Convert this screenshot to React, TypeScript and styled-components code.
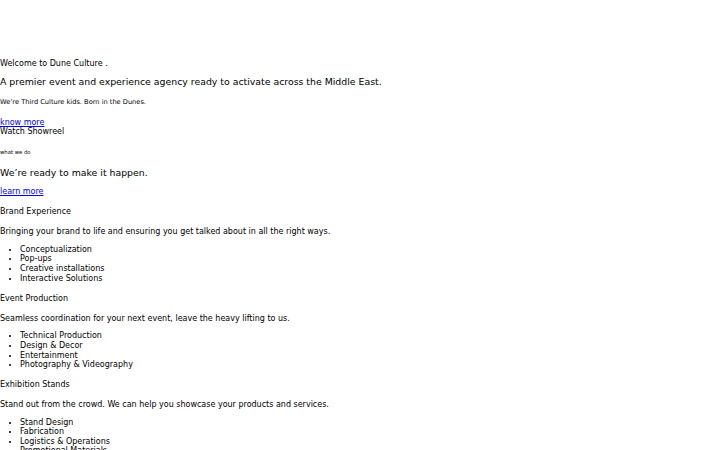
import React from "react";
import styled, { createGlobalStyle } from "styled-components";

const GlobalStyle = createGlobalStyle`
  html, body {
    margin: 0;
    padding: 0;
    background: #ffffff;
  }
  body {
    font-family: "DejaVu Sans", sans-serif;
    color: #000000;
    font-size: 8px;
    line-height: 9.4px;
  }
`;

const Page = styled.div`
  display: block;
`;

const Header = styled.header`
  height: 59px;
`;

const Hero = styled.section`
  display: block;
`;

const Text = styled.p<{ size?: number; top?: number }>`
  margin: ${props => (props.top !== undefined ? props.top : 0)}px 0 0 0;
  font-size: ${props => (props.size ? props.size : 8)}px;
  line-height: ${props => (props.size ? props.size * 1.17 : 9.4)}px;
`;

const Heading = styled.h2<{ top: number }>`
  margin: ${props => props.top}px 0 0 0;
  font-size: 9.35px;
  font-weight: normal;
  line-height: 11px;
`;

const Link = styled.a<{ top: number }>`
  display: block;
  margin-top: ${props => props.top}px;
  color: #0000ee;
  text-decoration: underline;
  font-size: 8px;
  line-height: 9.4px;
`;

const Plain = styled.div`
  font-size: 8px;
  line-height: 9.4px;
`;

const Services = styled.section`
  display: block;
`;

const Service = styled.div`
  display: block;
`;

const Title = styled.h3<{ top: number }>`
  margin: ${props => props.top}px 0 0 0;
  font-size: 8px;
  font-weight: normal;
  line-height: 9.4px;
`;

const List = styled.ul<{ top: number }>`
  margin: ${props => props.top}px 0 0 0;
  padding-left: 20px;
  list-style: disc;
`;

const Item = styled.li`
  font-size: 8px;
  line-height: 9.6px;
`;

const services = [
  {
    title: "Brand Experience",
    text: "Bringing your brand to life and ensuring you get talked about in all the right ways.",
    items: ["Conceptualization", "Pop-ups", "Creative installations", "Interactive Solutions"],
    top: 10.8
  },
  {
    title: "Event Production",
    text: "Seamless coordination for your next event, leave the heavy lifting to us.",
    items: ["Technical Production", "Design & Decor", "Entertainment", "Photography & Videography"],
    top: 10.4
  },
  {
    title: "Exhibition Stands",
    text: "Stand out from the crowd. We can help you showcase your products and services.",
    items: ["Stand Design", "Fabrication", "Logistics & Operations", "Promotional Materials"],
    top: 10.2
  }
];

const App: React.FunctionComponent = () => {
  return (
    <Page>
      <GlobalStyle />
      <Header />
      <Hero>
        <Text>Welcome to Dune Culture .</Text>
        <Heading top={8}>
          A premier event and experience agency ready to activate across the Middle East.
        </Heading>
        <Text size={6.65} top={11.8}>
          We’re Third Culture kids. Born in the Dunes.
        </Text>
        <Link top={11} href="#">
          know more
        </Link>
        <Plain>Watch Showreel</Plain>
      </Hero>
      <Services>
        <Text size={5.3} top={11.8}>
          what we do
        </Text>
        <Heading top={12.2}>We’re ready to make it happen.</Heading>
        <Link top={8.8} href="#">
          learn more
        </Link>
        {services.map(service => (
          <Service key={service.title}>
            <Title top={service.top}>{service.title}</Title>
            <Text top={10.6}>{service.text}</Text>
            <List top={8.4}>
              {service.items.map(item => (
                <Item key={item}>{item}</Item>
              ))}
            </List>
          </Service>
        ))}
      </Services>
    </Page>
  );
};

export default App;
